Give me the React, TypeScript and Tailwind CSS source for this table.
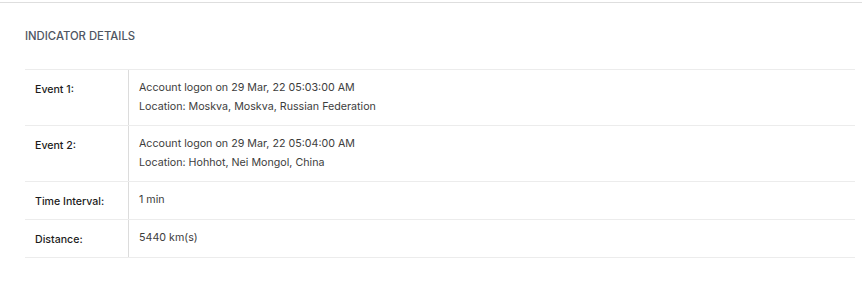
const rows = [
  {
    label: "Event 1:",
    lines: ["Account logon on 29 Mar, 22 05:03:00 AM", "Location: Moskva, Moskva, Russian Federation"],
  },
  {
    label: "Event 2:",
    lines: ["Account logon on 29 Mar, 22 05:04:00 AM", "Location: Hohhot, Nei Mongol, China"],
  },
  { label: "Time Interval:", lines: ["1 min"] },
  { label: "Distance:", lines: ["5440 km(s)"] },
];

const IndicatorDetails = () => {
  return (
    <div className="h-[304px] w-[862px] bg-white pt-[2px] font-['Inter',sans-serif]">
      <div className="border-t border-[#dedede] pl-[25px] pr-[7px]">
        <h3 className="pt-[25px] text-[11.3px] font-medium leading-[16px] text-[#4f5562]">
          INDICATOR DETAILS
        </h3>
        <div className="mt-[25px] border-t border-[#ececec]">
          {rows.map((row) => (
            <div key={row.label} className="flex border-b border-[#ececec]">
              <div className="w-[104px] shrink-0 border-r border-[#dcdcdc] pt-[10px] pb-[8px] pl-[10px] text-[10.6px] font-medium leading-[19px] text-[#1c1c1c]">
                {row.label}
              </div>
              <div className="pt-[8px] pb-[9px] pl-[10px] text-[10.7px] leading-[19px] text-[#3d3d3d]">
                {row.lines.map((line) => (
                  <div key={line}>{line}</div>
                ))}
              </div>
            </div>
          ))}
        </div>
      </div>
    </div>
  );
};

export default function App() {
  return <IndicatorDetails />;
}
